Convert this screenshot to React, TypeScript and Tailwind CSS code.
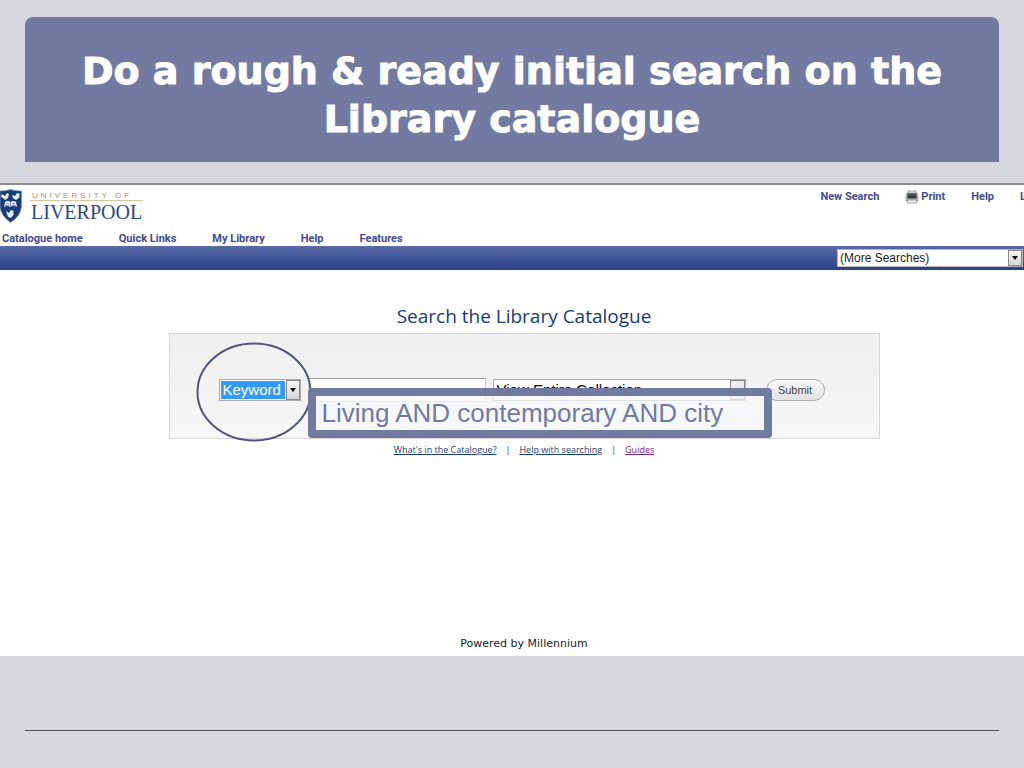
import React from 'react';

const navLinks = ['Catalogue home', 'Quick Links', 'My Library', 'Help', 'Features'];

const SelectArrow: React.FC = () => (
  <span className="pointer-events-none flex w-[14px] shrink-0 items-center justify-center border border-[#8a8a8a] bg-linear-to-b from-[#f6f6f6] to-[#d4d4d4]">
    <svg width="6" height="4" viewBox="0 0 6 4" aria-hidden="true">
      <path d="M0 0h6L3 4z" fill="#000" />
    </svg>
  </span>
);

const Crest: React.FC = () => (
  <svg width="22" height="34" viewBox="0 0 22 34" aria-hidden="true">
    <path
      d="M0 2Q5 2 10.500 0.500Q16 2 21.500 2V17Q21 27 10.500 33.500Q1 27 0 18Z"
      fill="#173c78"
      stroke="#8094b4"
      strokeWidth="0.8"
    />
    {/* birds */}
    <path d="M2 5l3 2 2-3 2 1-1 4-3 2-2-2-2-1zM12 6l3 1 2-3 3 1-1 2 1 1-4 3-3-2z" fill="#e8edf3" />
    <path d="M6 22l3 2 2-3 3 1-1 2 1 1-3 4-3-1-1-3z" fill="#e8edf3" />
    {/* open book */}
    <path d="M5 13q3-2 5.500 0q3-2 5.500 0l1 5q-4-2-6.500 0q-3-2-6.500 0z" fill="#e8edf3" />
    <path d="M10.500 13v5M6 14.500l3 .5M12 15l3-.5M5 16.500l4 .2M12 16.700l4-.2" stroke="#526b91" strokeWidth="0.7" fill="none" />
  </svg>
);

const Printer: React.FC = () => (
  <svg width="14" height="14" viewBox="0 0 14 14" aria-hidden="true">
    <path d="M3 1h8v3H3z" fill="#eee" stroke="#888" strokeWidth="0.8" />
    <path d="M1 5l1-2h10l1 2v6H1z" fill="#b8b8b8" stroke="#858585" strokeWidth="0.6" />
    <path d="M2.500 3.500h9v5h-9z" fill="#303b40" />
    <path d="M3 5h8" stroke="#64737a" strokeWidth="0.8" />
    <path d="M2.500 10h9v3h-9z" fill="#ededed" stroke="#999" strokeWidth="0.8" />
  </svg>
);

const SiteHeader: React.FC = () => (
  <header className="font-['Roboto',sans-serif] text-[11px] leading-[14px] font-bold text-[#3f4b94]">
    <div className="flex h-[46px] items-start justify-between pt-1">
      <a href="#home" className="flex items-start gap-2">
        <Crest />
        <span className="block font-normal">
          <span className="block border-b border-[#d8c6a0] px-[2px] pt-[2px] font-['Liberation_Sans',sans-serif] text-[8px] leading-[9px] tracking-[3px] text-[#b29351]">
            UNIVERSITY OF
          </span>
          <span className="block px-px font-['Liberation_Serif',serif] text-[20px] leading-[22px] text-[#244b8c]">
            LIVERPOOL
          </span>
        </span>
      </a>
      <nav className="flex items-center gap-[26px] pt-px pr-[22px]" aria-label="Tools">
        <a href="#search">New Search</a>
        <a href="#print" className="flex items-center gap-[2px]">
          <Printer />
          Print
        </a>
        <a href="#help">Help</a>
        <a href="#l">L</a>
      </nav>
    </div>
    <nav className="flex h-[15px] items-end gap-9 pl-[2px]" aria-label="Main">
      {navLinks.map((label) => (
        <a key={label} href="#nav" className="whitespace-nowrap">
          {label}
        </a>
      ))}
    </nav>
    <div className="flex h-6 items-center justify-end bg-linear-to-b from-[#5b6aa7] to-[#2c3f8b] pr-[25px]">
      <div className="flex h-[18px] w-[186px] border border-[#b5b5b5] bg-white">
        <select
          aria-label="More searches"
          className="min-w-0 flex-1 appearance-none bg-white pl-[2px] font-['Liberation_Sans',sans-serif] text-[12px] leading-[16px] font-normal text-[#222]"
        >
          <option>(More Searches)</option>
        </select>
        <SelectArrow />
      </div>
    </div>
  </header>
);

const SearchForm: React.FC = () => (
  <form
    className="relative mx-auto mt-1 h-[106px] w-[711px] max-w-full border border-[#d6d6d6] bg-linear-to-b from-[#efefef] to-[#f6f6f6] font-['Liberation_Sans',sans-serif]"
    onSubmit={(e) => e.preventDefault()}
  >
    <div className="flex items-center pt-[44px] pl-[49px]">
      <div className="flex h-[22px] w-[82px] border border-[#aaa] bg-white">
        <select
          aria-label="Search type"
          className="m-px min-w-0 flex-1 appearance-none bg-[#3399ff] pl-[2px] text-[15px] leading-[18px] text-white"
        >
          <option>Keyword</option>
        </select>
        <SelectArrow />
      </div>
      <input
        type="text"
        aria-label="Search terms"
        className="ml-[7px] h-6 w-[178px] border border-[#ccc] border-t-[#999] bg-white"
      />
      <div className="ml-[7px] flex h-[22px] w-[253px] border border-[#aaa] bg-white">
        <select
          aria-label="Collection"
          className="min-w-0 flex-1 appearance-none bg-white pl-[3px] text-[15px] leading-[20px] text-black"
        >
          <option>View Entire Collection</option>
        </select>
        <span className="pointer-events-none w-[15px] border border-[#888] bg-[#ececec]" />
      </div>
      <button
        type="submit"
        className="ml-5 h-[22px] w-[59px] rounded-full border border-[#aaa] bg-linear-to-b from-[#f8f8f8] to-[#e2e2e2] text-[11px] text-[#444]"
      >
        Submit
      </button>
    </div>

    {/* callouts drawn over the form */}
    <svg className="pointer-events-none absolute top-[8px] left-[26px]" width="116" height="100" viewBox="0 0 116 100" aria-hidden="true">
      <ellipse cx="58" cy="50" rx="56.500" ry="48.500" fill="none" stroke="#50557a" strokeWidth="2" />
    </svg>
    <div className="absolute top-[54px] left-[138px] h-[50px] w-[464px] rounded border-8 border-[#727aa2] bg-[#f7f8fb]/70 pl-[6px] text-[26px] leading-[34px] whitespace-nowrap text-[#727aa2]">
      Living AND contemporary AND city
    </div>
  </form>
);

export default function App() {
  return (
    <div className="flex min-h-screen flex-col overflow-x-hidden bg-[#d7d7e0] pt-[17px]">
      <div className="mx-[25px] rounded-t-lg bg-[#727aa2] px-10 pt-[30px] pb-[19px]">
        <h1 className="text-center font-['DejaVu_Sans',sans-serif] text-[38px] leading-[48px] font-bold text-white [-webkit-text-stroke:1px_white]">
          Do a rough &amp; ready initial search on the Library catalogue
        </h1>
      </div>

      {/* the catalogue page runs slightly past the right edge */}
      <main className="mt-[21px] w-[calc(100%+24px)] border-t-2 border-[#8b8b95] bg-white">
        <SiteHeader />
        <h2 className="mt-[34px] text-center font-['Open_Sans',sans-serif] text-[19px] leading-[25px] text-[#153b7c]">
          Search the Library Catalogue
        </h2>
        <SearchForm />
        <div className="mt-1 flex justify-center gap-[9px] font-['Open_Sans',sans-serif] text-[9px] leading-[14px] text-[#173f7c]">
          <a href="#what" className="underline">What's in the Catalogue?</a>
          <span>|</span>
          <a href="#searching" className="underline">Help with searching</a>
          <span>|</span>
          <a href="#guides" className="text-[#82249b] underline">Guides</a>
        </div>
        <footer className="pt-[179px] pb-1 text-center font-['DejaVu_Sans',sans-serif] text-[11px] leading-4 text-[#222]">
          Powered by Millennium
        </footer>
      </main>

      <hr className="mx-[25px] mt-auto mb-[37px] border-[#4e4e60]" />
    </div>
  );
}
